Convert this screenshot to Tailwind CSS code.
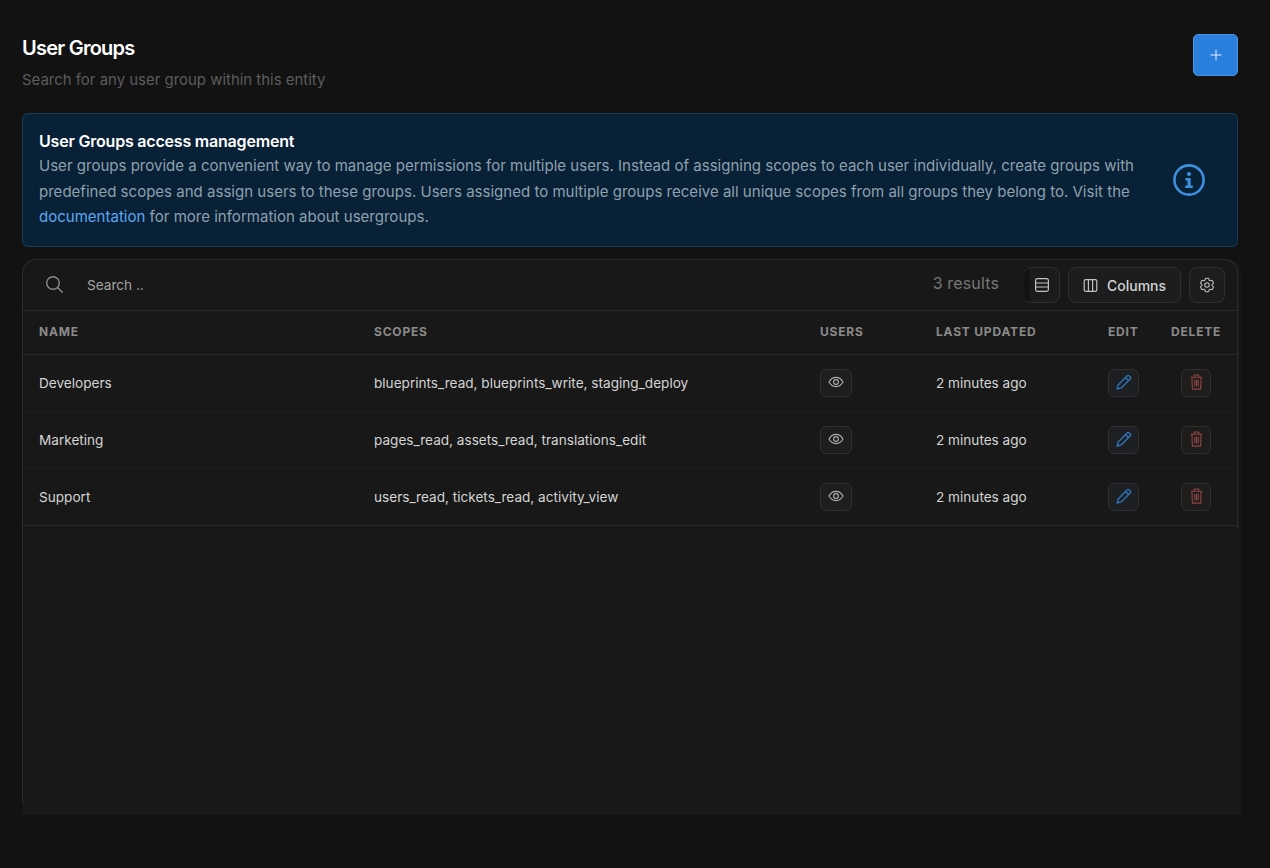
<!DOCTYPE html>
<html lang="en">
<head>
  <meta charset="UTF-8" />
  <title>User Groups</title>
  <script src="https://cdn.jsdelivr.net/npm/@tailwindcss/browser@4"></script>
</head>
<body class="h-[868px] overflow-hidden bg-[#121212] font-['Inter',sans-serif] text-[#d4d4d4]">
  <main class="pl-[22px] pt-[34px]">
    <!-- Header -->
    <div class="flex justify-between w-[1216px] h-[79px]">
      <div>
        <h1 class="text-[20px] leading-[28px] font-semibold tracking-[-0.76px] text-white">User Groups</h1>
        <p class="mt-[6px] text-[14.95px] leading-[24px] text-[#5c5c5c]">Search for any user group within this entity</p>
      </div>
      <button class="w-[45px] h-[42px] rounded-[5px] bg-[#2b7fdc] border border-[#4a93e4] flex items-center justify-center">
        <svg class="w-[12px] h-[12px]" viewBox="0 0 12 12" fill="none" stroke="#e4effb" stroke-width="1"><path d="M6 .5v11M.5 6h11" /></svg>
      </button>
    </div>

    <!-- Info banner -->
    <section class="w-[1216px] h-[134px] rounded-[6px] border border-[#173d5a] bg-[#082136] pl-[16px] pr-[32px] pt-[17px] flex justify-between">
      <div class="w-[1100px]">
        <h2 class="text-[16px] leading-[20px] font-semibold tracking-[-0.2px] text-white">User Groups access management</h2>
        <p class="mt-[2px] text-[15.04px] leading-[25.5px] text-[#8fa0ae]">User groups provide a convenient way to manage permissions for multiple users. Instead of assigning scopes to each user individually, create groups with predefined scopes and assign users to these groups. Users assigned to multiple groups receive all unique scopes from all groups they belong to. Visit the <a class="text-[#5ca8f2]">documentation</a> for more information about usergroups.</p>
      </div>
      <svg class="w-[32px] h-[32px] mt-[33px] shrink-0" viewBox="0 0 32 32" fill="none">
        <circle cx="16" cy="16" r="14.6" stroke="#3d8fdf" stroke-width="2.6" />
        <circle cx="16" cy="10" r="2.1" fill="#3d8fdf" />
        <path d="M12.4 14h5.300v7.400h2.100v2.600h-7.600v-2.600h2.300v-4.800h-2.100z" fill="#3d8fdf" />
      </svg>
    </section>

    <!-- Table panel -->
    <section class="mt-[12px] w-[1219px] h-[556px] rounded-t-[14px] bg-[#181818]">
      <div class="w-[1216px] h-[271px] rounded-t-[14px] border-x border-t border-[#2a2a2a]">
        <div class="h-[51px] flex items-center border-b border-[#282828] pl-[22px] pr-[12px]">
          <svg class="w-[20px] h-[20px] shrink-0 -mt-[3px] -ml-[1px]" viewBox="0 0 20 20" fill="none" stroke="#8a8a8a" stroke-width="1.4" stroke-linecap="round"><circle cx="9" cy="9" r="6.300" /><path d="M13.700 13.700l4.600 4.600" /></svg>
          <span class="ml-[23px] text-[13.6px] text-[#a3a3a3]">Search ..</span>
          <span class="ml-auto -mt-[4px] text-[16px] text-[#777777] tracking-[0.15px]">3 results</span>
          <button class="ml-[25px] w-[36px] h-[36px] rounded-[8px] border border-l-0 border-[#2f2f2f] bg-[linear-gradient(90deg,#131313_6px,#1b1b1b_6px)] flex items-center justify-center">
            <svg class="w-[16px] h-[16px]" viewBox="0 0 16 16" fill="none" stroke="#c4c4c4" stroke-width="1.2"><rect x="1.6" y="1.6" width="12.8" height="12.8" rx="1.8" /><path d="M1.600 6h12.800M1.600 10h12.800" /></svg>
          </button>
          <button class="ml-[8px] w-[113px] h-[36px] rounded-[8px] border border-[#2f2f2f] bg-[#1d1d1d] flex items-center justify-center gap-[9px] text-[14px] font-medium text-[#d4d4d4]">
            <svg class="w-[15px] h-[15px]" viewBox="0 0 15 15" fill="none" stroke="#c4c4c4" stroke-width="1.2"><rect x="1.200" y="1.600" width="12.600" height="11.800" rx="1.600" /><path d="M5.400 1.600v11.800M9.600 1.600v11.800" /></svg>
            Columns
          </button>
          <button class="ml-[8px] w-[36px] h-[36px] rounded-[8px] border border-[#2f2f2f] bg-[#1d1d1d] flex items-center justify-center">
            <svg class="w-[18px] h-[18px]" viewBox="0 0 24 24" fill="none" stroke="#c4c4c4" stroke-width="1.400" stroke-linecap="round" stroke-linejoin="round"><path d="M9.594 3.940c.09-.542.56-.94 1.110-.94h2.593c.55 0 1.020.398 1.110.94l.213 1.281c.063.374.313.686.645.870.074.04.147.083.22.127.325.196.72.257 1.075.124l1.217-.456a1.125 1.125 0 0 1 1.370.490l1.296 2.247a1.125 1.125 0 0 1-.26 1.431l-1.003.827c-.293.241-.438.613-.43.992a7.723 7.723 0 0 1 0 .255c-.008.378.137.75.43.991l1.004.827c.424.35.534.955.26 1.430l-1.298 2.247a1.125 1.125 0 0 1-1.369.491l-1.217-.456c-.355-.133-.75-.072-1.076.124a6.470 6.470 0 0 1-.22.128c-.331.183-.581.495-.644.869l-.213 1.281c-.09.543-.56.94-1.110.94h-2.594c-.55 0-1.019-.398-1.110-.94l-.213-1.281c-.062-.374-.312-.686-.644-.870a6.520 6.520 0 0 1-.22-.127c-.325-.196-.72-.257-1.076-.124l-1.217.456a1.125 1.125 0 0 1-1.369-.49l-1.297-2.247a1.125 1.125 0 0 1 .26-1.431l1.004-.827c.292-.24.437-.613.43-.991a6.932 6.932 0 0 1 0-.255c.007-.38-.138-.751-.43-.992l-1.004-.827a1.125 1.125 0 0 1-.26-1.430l1.297-2.247a1.125 1.125 0 0 1 1.370-.491l1.216.456c.356.133.751.072 1.076-.124.072-.044.146-.086.22-.128.332-.183.582-.495.644-.869l.214-1.280z" /><path d="M15 12a3 3 0 1 1-6 0 3 3 0 0 1 6 0z" /></svg>
          </button>
        </div>

        <table class="w-full table-fixed border-collapse">
          <thead>
            <tr class="h-[43px] border-b border-[#282828] text-left text-[12px] tracking-[0.8px] text-[#8a8a8a]">
              <th class="w-[351px] pl-[16px] font-bold">NAME</th>
              <th class="w-[446px] font-bold">SCOPES</th>
              <th class="w-[116px] font-bold">USERS</th>
              <th class="w-[172px] font-bold">LAST UPDATED</th>
              <th class="w-[63px] font-bold">EDIT</th>
              <th class="font-bold">DELETE</th>
            </tr>
          </thead>
          <tbody class="text-[13.6px] text-[#d4d4d4]">
            <tr class="h-[57px] border-b border-[#1f1f1f]">
              <td class="pl-[16px] pt-[2px]">Developers</td>
              <td class="pt-[2px]">blueprints_read, blueprints_write, staging_deploy</td>
              <td><button class="w-[32px] h-[28px] rounded-[6px] border border-[#303030] bg-[#1e1e1e] flex items-center justify-center"><svg class="w-[16px] h-[16px] -mt-[2px]" viewBox="0 0 16 16" fill="none" stroke="#b0b0b0" stroke-width="1.1"><path d="M1 8s2.600-4.600 7-4.600S15 8 15 8s-2.600 4.600-7 4.600S1 8 1 8z" /><circle cx="8" cy="8" r="2.400" /></svg></button></td>
              <td class="pt-[2px]">2 minutes ago</td>
              <td><button class="w-[31px] h-[28px] rounded-[6px] border border-[#303030] bg-[#1d1f22] flex items-center justify-center"><svg class="w-[17px] h-[17px]" viewBox="0 0 16 16" fill="none" stroke="#2f73b8" stroke-width="1.300" stroke-linejoin="round"><path d="M11.300 1.800a1.500 1.500 0 0 1 2.100 0l.8.8a1.500 1.500 0 0 1 0 2.100l-8.400 8.400-3.800 1 1-3.800z" /><path d="M9.800 3.300l2.900 2.900" /></svg></button></td>
              <td><button class="ml-[10px] w-[30px] h-[28px] rounded-[6px] border border-[#303030] bg-[#1f1c1c] flex items-center justify-center"><svg class="w-[13px] h-[16px] -mt-[1px]" viewBox="0 0 13 16" fill="none" stroke="#8f4646" stroke-width="1.100"><path d="M.8 3.300h11.400M4.200 3.300V1h4.600v2.300M1.900 3.300l.5 11.800h8.200l.5-11.800M4.800 5.800v6.800M6.500 5.800v6.800M8.200 5.800v6.800" /></svg></button></td>
            </tr>
            <tr class="h-[57px] border-b border-[#1f1f1f]">
              <td class="pl-[16px] pt-[2px]">Marketing</td>
              <td class="pt-[2px]">pages_read, assets_read, translations_edit</td>
              <td><button class="w-[32px] h-[28px] rounded-[6px] border border-[#303030] bg-[#1e1e1e] flex items-center justify-center"><svg class="w-[16px] h-[16px] -mt-[2px]" viewBox="0 0 16 16" fill="none" stroke="#b0b0b0" stroke-width="1.1"><path d="M1 8s2.600-4.600 7-4.600S15 8 15 8s-2.600 4.600-7 4.600S1 8 1 8z" /><circle cx="8" cy="8" r="2.400" /></svg></button></td>
              <td class="pt-[2px]">2 minutes ago</td>
              <td><button class="w-[31px] h-[28px] rounded-[6px] border border-[#303030] bg-[#1d1f22] flex items-center justify-center"><svg class="w-[17px] h-[17px]" viewBox="0 0 16 16" fill="none" stroke="#2f73b8" stroke-width="1.300" stroke-linejoin="round"><path d="M11.300 1.800a1.500 1.500 0 0 1 2.100 0l.8.8a1.500 1.500 0 0 1 0 2.100l-8.400 8.400-3.800 1 1-3.800z" /><path d="M9.800 3.300l2.900 2.900" /></svg></button></td>
              <td><button class="ml-[10px] w-[30px] h-[28px] rounded-[6px] border border-[#303030] bg-[#1f1c1c] flex items-center justify-center"><svg class="w-[13px] h-[16px] -mt-[1px]" viewBox="0 0 13 16" fill="none" stroke="#8f4646" stroke-width="1.100"><path d="M.8 3.300h11.400M4.200 3.300V1h4.600v2.300M1.900 3.300l.5 11.800h8.200l.5-11.800M4.800 5.800v6.800M6.500 5.800v6.800M8.200 5.800v6.800" /></svg></button></td>
            </tr>
            <tr class="h-[57px] border-b border-[#282828]">
              <td class="pl-[16px] pt-[2px]">Support</td>
              <td class="pt-[2px]">users_read, tickets_read, activity_view</td>
              <td><button class="w-[32px] h-[28px] rounded-[6px] border border-[#303030] bg-[#1e1e1e] flex items-center justify-center"><svg class="w-[16px] h-[16px] -mt-[2px]" viewBox="0 0 16 16" fill="none" stroke="#b0b0b0" stroke-width="1.1"><path d="M1 8s2.600-4.600 7-4.600S15 8 15 8s-2.600 4.600-7 4.600S1 8 1 8z" /><circle cx="8" cy="8" r="2.400" /></svg></button></td>
              <td class="pt-[2px]">2 minutes ago</td>
              <td><button class="w-[31px] h-[28px] rounded-[6px] border border-[#303030] bg-[#1d1f22] flex items-center justify-center"><svg class="w-[17px] h-[17px]" viewBox="0 0 16 16" fill="none" stroke="#2f73b8" stroke-width="1.300" stroke-linejoin="round"><path d="M11.300 1.800a1.500 1.500 0 0 1 2.100 0l.8.8a1.500 1.500 0 0 1 0 2.100l-8.400 8.400-3.800 1 1-3.800z" /><path d="M9.800 3.300l2.900 2.900" /></svg></button></td>
              <td><button class="ml-[10px] w-[30px] h-[28px] rounded-[6px] border border-[#303030] bg-[#1f1c1c] flex items-center justify-center"><svg class="w-[13px] h-[16px] -mt-[1px]" viewBox="0 0 13 16" fill="none" stroke="#8f4646" stroke-width="1.100"><path d="M.8 3.300h11.400M4.200 3.300V1h4.600v2.300M1.900 3.300l.5 11.800h8.200l.5-11.800M4.800 5.800v6.800M6.500 5.800v6.800M8.200 5.800v6.800" /></svg></button></td>
            </tr>
          </tbody>
        </table>
      </div>
      <!-- rest of the panel: only the left edge keeps its border -->
      <div class="w-[1216px] h-[276px] rounded-bl-[8px] border-l border-[#2a2a2a]"></div>
    </section>
  </main>
</body>
</html>
